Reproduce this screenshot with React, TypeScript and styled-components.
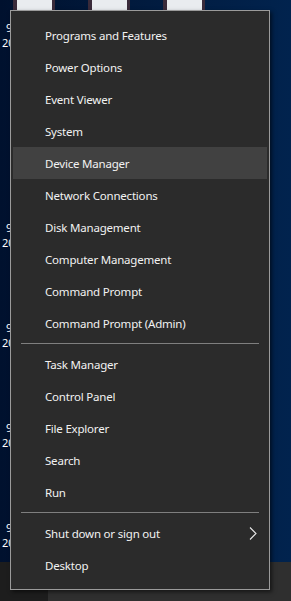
import { Fragment } from "react";
import styled, { createGlobalStyle } from "styled-components";

const GlobalStyle = createGlobalStyle`
  html, body {
    margin: 0;
    padding: 0;
    width: 291px;
    height: 601px;
    overflow: hidden;
    background: #011b3f;
  }
`;

const Screen = styled.div`
  position: relative;
  display: flex;
  flex-direction: column;
  width: 291px;
  height: 601px;
  overflow: hidden;
  font-family: "Noto Sans", "Open Sans", sans-serif;
`;

const Desktop = styled.div`
  flex: 1;
  display: flex;
  flex-direction: column;
  overflow: hidden;
  background: linear-gradient(90deg, #00112e 0%, #011a3d 45%, #01234e 100%);
`;

const ThumbRow = styled.div`
  display: flex;
  gap: 33px;
  height: 10px;
  padding-left: 13px;
`;

const Thumb = styled.div`
  width: 42px;
  height: 10px;
  background: #e9ecef;
  border-left: 4px solid #3a2b3a;
  border-right: 3px solid #3a2b3a;
  box-sizing: border-box;
`;

const LabelColumn = styled.div`
  display: grid;
  grid-auto-rows: 100px;
  padding: 10px 0 0 2px;
`;

const Label = styled.div`
  display: flex;
  flex-direction: column;
  color: #ffffff;
  font-size: 11px;
  line-height: 15px;
  white-space: nowrap;
`;

const LabelLine = styled.span<{ $indent: number }>`
  padding-left: ${(p) => p.$indent}px;
`;

const Taskbar = styled.div`
  display: flex;
  height: 39px;
  background: #2f2f2f;
`;

const StartButton = styled.div`
  width: 48px;
  background: #1d1d1d;
`;

const Menu = styled.nav`
  position: absolute;
  left: 10px;
  top: 10px;
  width: 258px;
  padding: 8px 0;
  background: #2b2b2b;
  border: 1px solid #9b9b9b;
  box-shadow: 2px 2px 4px rgba(0, 0, 0, 0.55);
  display: flex;
  flex-direction: column;
`;

const Item = styled.div<{ $active?: boolean }>`
  display: flex;
  align-items: center;
  justify-content: space-between;
  height: 32px;
  margin: 0 2px;
  padding: 0 10px 0 32px;
  color: #f2f2f2;
  font-size: 11.5px;
  letter-spacing: -0.2px;
  background: ${(p) => (p.$active ? "#414141" : "transparent")};
`;

const Separator = styled.div`
  height: 1px;
  margin: 4px 10px;
  background: #7f7f7f;
`;

const Chevron = () => (
  <svg width="8" height="13" viewBox="0 0 8 13">
    <polyline points="1,0.5 7,6.5 1,12.5" fill="none" stroke="#e8e8e8" strokeWidth="1.1" />
  </svg>
);

const groups = [
  [
    "Programs and Features",
    "Power Options",
    "Event Viewer",
    "System",
    "Device Manager",
    "Network Connections",
    "Disk Management",
    "Computer Management",
    "Command Prompt",
    "Command Prompt (Admin)",
  ],
  ["Task Manager", "Control Panel", "File Explorer", "Search", "Run"],
  ["Shut down or sign out", "Desktop"],
];

const labels = [true, false, true, true, true, true];

export default function App() {
  return (
    <>
      <GlobalStyle />
      <Screen>
        <Desktop>
          <ThumbRow>
            <Thumb />
            <Thumb />
            <Thumb />
          </ThumbRow>
          <LabelColumn>
            {labels.map((shown, i) => (
              <Label key={i}>
                {shown && (
                  <>
                    <LabelLine $indent={4}>9 (1)</LabelLine>
                    <LabelLine $indent={0}>2017-05</LabelLine>
                  </>
                )}
              </Label>
            ))}
          </LabelColumn>
        </Desktop>
        <Taskbar>
          <StartButton />
        </Taskbar>
        <Menu>
          {groups.map((g, gi) => (
            <Fragment key={gi}>
              {gi > 0 && <Separator />}
              {g.map((name) => (
                <Item key={name} $active={name === "Device Manager"}>
                  {name}
                  {name === "Shut down or sign out" && <Chevron />}
                </Item>
              ))}
            </Fragment>
          ))}
        </Menu>
      </Screen>
    </>
  );
}
